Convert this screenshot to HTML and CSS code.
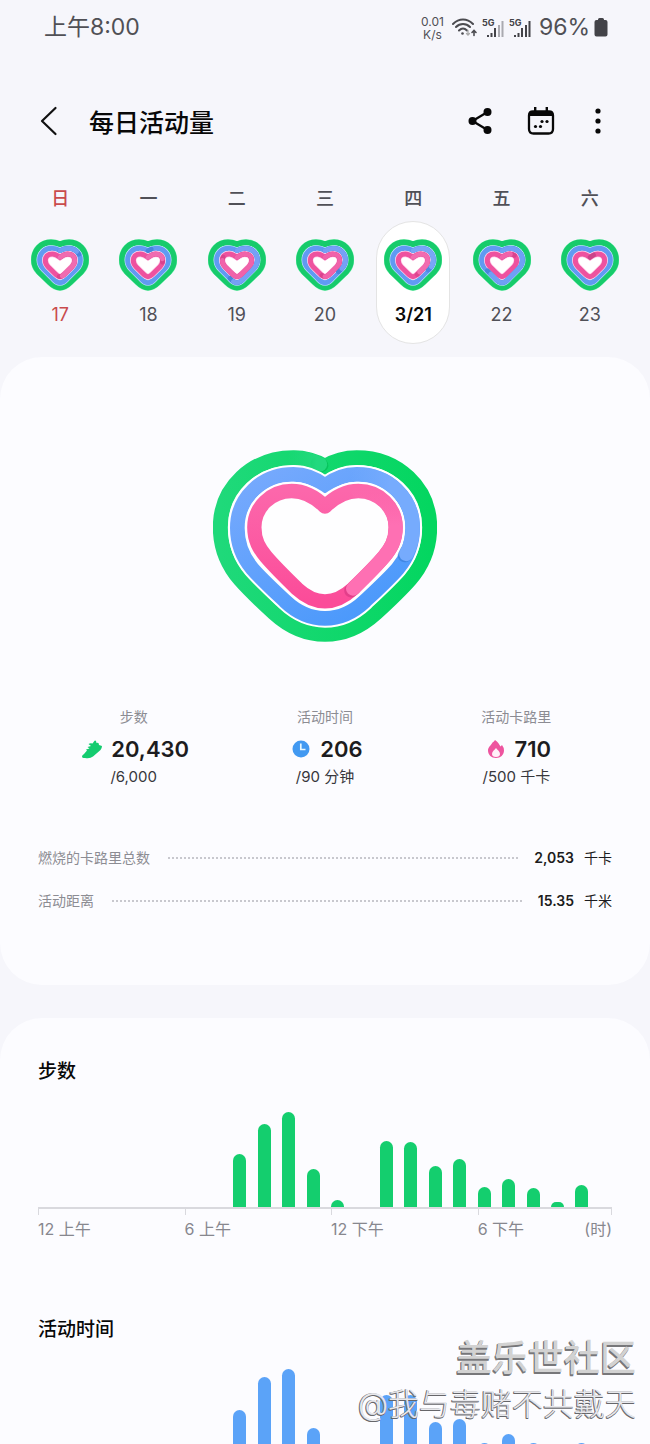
FILE: index.html
```html
<!DOCTYPE html>
<html lang="zh-CN">
<head>
<meta charset="utf-8">
<meta name="viewport" content="width=device-width, initial-scale=1">
<title>每日活动量</title>
<link rel="stylesheet" href="styles.css">
</head>
<body>
<svg class="defs" aria-hidden="true">
  <defs>
    <path id="s-green" pathLength="100" d="M87 15C96 11 104 9 114 9C144 9 165 32 165 62C165 77 160 87 151 97L118 129C108 139 99 145 87 145C75 145 66 139 56 129L23 97C14 87 9 77 9 62C9 32 30 9 60 9C70 9 78 11 87 15Z"/>
    <path id="s-blue" pathLength="100" d="M87 34C96 29 104 27 112 27C133 27 148 42 148 62C148 74 143 82 136 89L108 117C101 125 95 130 87 130C79 130 73 125 66 117L38 89C31 82 26 74 26 62C26 42 41 27 62 27C70 27 78 29 87 34Z"/>
    <path id="s-pink" pathLength="100" d="M87 54C96 47 102 44 110 44C123 44 131 51 131 63C131 71 128 77 123 82L104 101C97 108 93 112 87 112C81 112 77 108 70 101L51 82C46 77 43 71 43 63C43 51 51 44 64 44C72 44 78 47 87 54Z"/>
    <g id="rings" fill="none">
      <use href="#s-green" stroke="#7df3b4" stroke-width="19"/>
      <use href="#s-green" stroke="#17cb6b" stroke-width="17"/>
      <use href="#s-blue" stroke="#b9dcff" stroke-width="19"/>
      <use href="#s-blue" stroke="#609af2" stroke-width="15"/>
      <use href="#s-pink" fill="#fff" stroke="#ffd0ea" stroke-width="19"/>
      <use href="#s-pink" stroke="#ee529f" stroke-width="15"/>
    </g>
    <linearGradient id="g-green" x1="0" x2="1"><stop offset="0" stop-color="#1fd97a"/><stop offset="1" stop-color="#04d660"/></linearGradient>
    <linearGradient id="g-blue" x1="0" y1="0" x2="0.7" y2="1"><stop offset="0" stop-color="#78aafd"/><stop offset="1" stop-color="#4b99fb"/></linearGradient>
    <linearGradient id="g-pink" x1="0" y1="0" x2="0" y2="1"><stop offset="0" stop-color="#fc67ab"/><stop offset="1" stop-color="#fb4c99"/></linearGradient>
    <linearGradient id="t-green" gradientUnits="userSpaceOnUse" x1="260" y1="0" x2="350" y2="0"><stop offset="0" stop-color="#22d97e" stop-opacity="0"/><stop offset="1" stop-color="#22d97e"/></linearGradient>
    <linearGradient id="t-blue" gradientUnits="userSpaceOnUse" x1="450" y1="0" x2="570" y2="0"><stop offset="0" stop-color="#76abfd" stop-opacity="0"/><stop offset="1" stop-color="#76abfd"/></linearGradient>
    <linearGradient id="t-pink" gradientUnits="userSpaceOnUse" x1="0" y1="160" x2="0" y2="270"><stop offset="0" stop-color="#fe70b3" stop-opacity="0"/><stop offset="1" stop-color="#fe70b3"/></linearGradient>
  </defs>
</svg>

<div class="screen">
  <div class="status">
    <span class="clock">上午8:00</span>
    <div class="status-right">
      <span class="speed">0.01<br>K/s</span>
      <svg class="wifi" viewBox="0 0 26 22" fill="none" stroke="#4b4b50" stroke-width="2" stroke-linecap="round">
        <path d="M1 7C7 1 15 1 21 7M4 10C8 6 14 6 18 10M7 13.500C9.500 11 12.500 11 15 13.500"/>
        <circle cx="10.500" cy="16.500" r="1.300" fill="#4b4b50" stroke="none"/>
        <path d="M16 13.500V18M14.500 16.500L16 18L17.500 16.500" stroke="#aaa" stroke-width="1.300"/>
        <path d="M22 18.500V13.500M20 15.500L22 13.500L24 15.500" stroke-width="1.600"/>
      </svg>
      <svg class="signal" viewBox="0 0 23 22" fill="#434348">
        <text x="0" y="9">5G</text>
        <path d="M5 18h2v2h-2zM8.500 16h2v4h-2zM12 11h2v9h-2z"/><path fill="#aaaab0" d="M16 8h2v12h-2zM19.500 4h2v16h-2z"/>
      </svg>
      <svg class="signal" viewBox="0 0 23 22" fill="#434348">
        <text x="0" y="9">5G</text>
        <path d="M5 18h2v2h-2zM8.500 16h2v4h-2zM12 11h2v9h-2zM16 8h2v12h-2zM19.500 4h2v16h-2z"/>
      </svg>
      <span class="percent">96%</span>
      <svg class="battery" viewBox="0 0 14 20" fill="#434348"><path d="M4 1.500Q4 0 5.500 0H8.500Q10 0 10 1.500V2H11.500Q13.500 2 13.500 4V16.500Q13.500 18.500 11.500 18.500H2.500Q.500 18.500 .500 16.500V4Q.500 2 2.500 2H4Z"/></svg>
    </div>
  </div>

  <header class="topbar">
    <button class="icon-btn back" aria-label="返回"><svg viewBox="0 0 18 30" fill="none" stroke="#111" stroke-width="2.200" stroke-linecap="round" stroke-linejoin="round"><path d="M15.500 2L2 15L15.500 28"/></svg></button>
    <h1>每日活动量</h1>
    <div class="actions">
      <button class="icon-btn" aria-label="分享"><svg viewBox="0 0 28 28"><path d="M21.500 5L6.500 14L21.500 23" fill="none" stroke="#080808" stroke-width="2.300"/><g fill="#080808"><circle cx="21.500" cy="5" r="4"/><circle cx="6.500" cy="14" r="4"/><circle cx="21.500" cy="23" r="4"/></g></svg></button>
      <button class="icon-btn" aria-label="日历"><svg viewBox="0 0 28 28" fill="#080808"><path fill="none" stroke="#080808" stroke-width="2.300" d="M6 4.500H22Q26 4.500 26 8.500V22Q26 26.500 21.500 26.500H6.500Q2 26.500 2 22V8.500Q2 4.500 6 4.500Z"/><path d="M2 9V8Q2 4 6 4H22Q26 4 26 8V9Z"/><path d="M7 0h2.400v5H7zM18.600 0H21v5h-2.400z"/><circle cx="15" cy="14.500" r="1.600"/><circle cx="20" cy="14.500" r="1.600"/><circle cx="8.500" cy="19.500" r="1.600"/><circle cx="13.500" cy="19.500" r="1.600"/></svg></button>
      <button class="icon-btn more" aria-label="更多选项"><svg viewBox="0 0 20 28" fill="#080808"><circle cx="10" cy="4" r="2.600"/><circle cx="10" cy="14" r="2.600"/><circle cx="10" cy="24" r="2.600"/></svg></button>
    </div>
  </header>

  <nav class="week" aria-label="星期">
    <div class="day sunday"><span class="weekday">日</span><button class="date"><svg viewBox="0 0 174 154"><use href="#rings"/><g class="tails"><use href="#s-blue" stroke="#4784dc" stroke-dasharray="18 100"/><use href="#s-blue" stroke="#6f9ff5" stroke-dasharray="15 100"/><use href="#s-pink" stroke="#d9438d" stroke-dasharray="51 100"/><use href="#s-pink" stroke="#f06bb0" stroke-dasharray="47 100"/></g></svg>17</button></div>
    <div class="day"><span class="weekday">一</span><button class="date"><svg viewBox="0 0 174 154"><use href="#rings"/><g class="tails"><use href="#s-blue" stroke="#4784dc" stroke-dasharray="3 100"/><use href="#s-blue" stroke="#76a6f6" stroke-dasharray="18 100" stroke-dashoffset="18"/><use href="#s-pink" stroke="#d9438d" stroke-dasharray="25 100"/><use href="#s-pink" stroke="#f06bb0" stroke-dasharray="21 100"/></g></svg>18</button></div>
    <div class="day"><span class="weekday">二</span><button class="date"><svg viewBox="0 0 174 154"><use href="#rings"/><g class="tails"><use href="#s-blue" stroke="#4784dc" stroke-dasharray="57 100"/><use href="#s-blue" stroke="#76a0f6" stroke-dasharray="53 100"/><use href="#s-pink" stroke="#d9438d" stroke-dasharray="81 100"/><use href="#s-pink" stroke="#f062aa" stroke-dasharray="77 100"/></g></svg>19</button></div>
    <div class="day"><span class="weekday">三</span><button class="date"><svg viewBox="0 0 174 154"><use href="#rings"/><g class="tails"><use href="#s-blue" stroke="#4784dc" stroke-dasharray="35 100"/><use href="#s-blue" stroke="#76a0f6" stroke-dasharray="31 100"/><use href="#s-pink" stroke="#d9438d" stroke-dasharray="54 100"/><use href="#s-pink" stroke="#f062aa" stroke-dasharray="50 100"/></g></svg>20</button></div>
    <div class="day"><span class="weekday">四</span><button class="date selected" aria-current="date"><svg viewBox="0 0 174 154"><use href="#rings"/><g class="tails"><use href="#s-blue" stroke="#4b8ae4" stroke-dasharray="33 100"/><use href="#s-blue" stroke="#79a6f7" stroke-dasharray="29 100"/><use href="#s-pink" stroke="#df468f" stroke-dasharray="44 100"/><use href="#s-pink" stroke="#f26cb0" stroke-dasharray="40 100"/></g></svg>3/21</button></div>
    <div class="day"><span class="weekday">五</span><button class="date"><svg viewBox="0 0 174 154"><use href="#rings"/><g class="tails"><use href="#s-blue" stroke="#4784dc" stroke-dasharray="66 100"/><use href="#s-blue" stroke="#6fa0f6" stroke-dasharray="62 100"/><use href="#s-pink" stroke="#d9438d" stroke-dasharray="16 100"/><use href="#s-pink" stroke="#f062aa" stroke-dasharray="11 100"/></g></svg>22</button></div>
    <div class="day"><span class="weekday">六</span><button class="date"><svg viewBox="0 0 174 154"><use href="#rings"/><g class="tails"><use href="#s-blue" stroke="#76a6f6" stroke-dasharray="17 100" stroke-dashoffset="17"/><use href="#s-pink" stroke="#cc4489" stroke-dasharray="5 100"/></g></svg>23</button></div>
  </nav>

  <main>
    <section class="card summary">
      <svg class="heart" viewBox="39 46 672 576" fill="none" role="img" aria-label="每日活动量">
        <path stroke="url(#g-green)" stroke-width="45" stroke-miterlimit="8" d="M375 95C405 77 435 69 470 69C592 69 689 158 689 278C689 342 666 392 630 434C602 466 564 502 528 535C482 577 435 599 375 599C315 599 268 577 222 535C186 502 148 466 120 434C84 392 61 342 61 278C61 158 158 69 280 69C315 69 345 77 375 95Z"/>
        <path stroke="#02b552" stroke-width="40" stroke-linecap="round" opacity=".6" d="M352 86L365 92"/>
        <path stroke="url(#t-green)" stroke-width="43" stroke-linecap="round" d="M285 69C313 70 336 77 360 89"/>
        <path stroke="#fff" stroke-width="56" stroke-miterlimit="8" d="M375 153C405 130 438 119 470 119C565 119 638 190 638 280C638 330 620 370 593 402C568 431 528 468 494 500C458 534 420 551 375 551C330 551 292 534 256 500C222 468 182 431 157 402C130 370 112 330 112 280C112 190 185 119 280 119C312 119 345 130 375 153Z"/>
        <path stroke="url(#g-blue)" stroke-width="44" stroke-miterlimit="8" d="M375 153C405 130 438 119 470 119C565 119 638 190 638 280C638 330 620 370 593 402C568 431 528 468 494 500C458 534 420 551 375 551C330 551 292 534 256 500C222 468 182 431 157 402C130 370 112 330 112 280C112 190 185 119 280 119C312 119 345 130 375 153Z"/>
        <path stroke="#3579d4" stroke-width="42" stroke-linecap="round" opacity=".6" d="M619 352L614 362"/>
        <path stroke="url(#t-blue)" stroke-width="43" stroke-linecap="round" d="M470 119C565 119 638 190 638 280C638 309 631 335 619 358"/>
        <path stroke="#fff" stroke-width="55" d="M375 212C340 181 310 169 275 169C213 169 163 218 163 278C163 318 178 342 198 366C220 392 258 430 292 463C318 487 345 500 375 500C405 500 432 487 458 463C492 430 530 392 552 366C572 342 587 318 587 278C587 218 537 169 475 169C440 169 410 181 375 212Z"/>
        <path stroke="url(#g-pink)" stroke-width="43" stroke-linejoin="round" fill="#fefeff" d="M375 216C340 181 310 169 275 169C213 169 163 218 163 278C163 318 178 342 198 366C220 392 258 430 292 463C318 487 345 500 375 500C405 500 432 487 458 463C492 430 530 392 552 366C572 342 587 318 587 278C587 218 537 169 475 169C440 169 410 181 375 216Z"/>
        <path stroke="#d43580" stroke-width="41" stroke-linecap="round" opacity=".6" d="M464 458L453 468"/>
        <path stroke="url(#t-pink)" stroke-width="42" stroke-linecap="round" d="M475 169C537 169 587 218 587 278C587 318 572 342 552 366C530 392 492 430 459 462"/>
      </svg>
      <div class="stats">
        <div class="stat"><span class="stat-label">步数</span>
          <strong><svg viewBox="0 0 20 20" fill="#14cc70"><path d="M0 17.500Q0 16 2 15L5 11.500L4 10.500L7.500 9.500L5.500 8L9 7L6.500 5Q8 4 10.500 4.500L12 2.500Q13 1 14 2L14.500 4Q17 3 17 6L20 7Q20 9 18.500 11L11 17.500Q8 20 3 19Q0 19 0 17.500Z"/></svg>20,430</strong><span class="goal">/6,000</span></div>
        <div class="stat"><span class="stat-label">活动时间</span>
          <strong><svg viewBox="0 0 20 20"><circle cx="10" cy="10" r="8.500" fill="#4299f1"/><path d="M9.800 4.500V10.500H14.500" fill="none" stroke="#e7f8ff" stroke-width="1.700"/></svg>206</strong><span class="goal">/90 分钟</span></div>
        <div class="stat"><span class="stat-label">活动卡路里</span>
          <strong><svg viewBox="0 0 20 20"><path fill="#ee549f" d="M9 1C12 3 13 5 14.500 7.500L16 6Q18 8.500 18 11.500C18 16 14.500 19 10 19S2 16 2 11.500C2 8 5 6.500 6.500 3.500Q8 2.500 9 1Z"/><path fill="#fff0f8" d="M10 9C11.500 11 14 12.500 14 15Q14 18 10 18Q6 18 6 15C6 12.500 8.500 11 10 9Z"/></svg>710</strong><span class="goal">/500 千卡</span></div>
      </div>
      <dl class="details">
        <div class="detail"><dt>燃烧的卡路里总数</dt><dd><b>2,053</b>千卡</dd></div>
        <div class="detail"><dt>活动距离</dt><dd><b>15.35</b>千米</dd></div>
      </dl>
    </section>

    <section class="card charts">
      <h2>步数</h2>
      <div class="chart">
        <div class="bars steps">
          <i class="h8" style="height:53px"></i><i class="h9" style="height:83px"></i><i class="h10" style="height:95px"></i><i class="h11" style="height:38px"></i><i class="h12" style="height:7px"></i><i class="h14" style="height:66px"></i><i class="h15" style="height:65px"></i><i class="h16" style="height:41px"></i><i class="h17" style="height:48px"></i><i class="h18" style="height:20px"></i><i class="h19" style="height:28px"></i><i class="h20" style="height:19px"></i><i class="h21" style="height:5px"></i><i class="h22" style="height:22px"></i>
        </div>
        <div class="axis"><span>12 上午</span><span>6 上午</span><span>12 下午</span><span class="last">6 下午<em>(时)</em></span></div>
      </div>
      <h2>活动时间</h2>
      <div class="chart">
        <div class="bars active">
          <i class="h8" style="height:55px"></i><i class="h9" style="height:88px"></i><i class="h10" style="height:96px"></i><i class="h11" style="height:37px"></i><i class="h12" style="height:7px"></i><i class="h14" style="height:70px"></i><i class="h15" style="height:70px"></i><i class="h16" style="height:43px"></i><i class="h17" style="height:46px"></i><i class="h18" style="height:22px"></i><i class="h19" style="height:31px"></i><i class="h20" style="height:22px"></i><i class="h21" style="height:5px"></i><i class="h22" style="height:22px"></i>
        </div>
      </div>
    </section>
  </main>

  <div class="watermark"><div class="community">盖乐世社区</div><div class="author">@我与毒赌不共戴天</div></div>
</div>
</body>
</html>
```
FILE: styles.css
```css
* { box-sizing: border-box; }
body {
  margin: 0;
  background: #f6f6fb;
  color: #1c1c20;
  font-family: Inter, "Noto Sans CJK SC", sans-serif;
}
h1, h2, dl, dd { margin: 0; }
button {
  border: 0;
  padding: 0;
  background: none;
  color: inherit;
  font: inherit;
  cursor: pointer;
}
svg { display: block; }
.defs { position: absolute; width: 0; height: 0; }
.screen { position: relative; height: 100vh; overflow: hidden; }

.status {
  display: flex;
  justify-content: space-between;
  align-items: center;
  height: 56px;
  padding: 0 42px 0 44px;
  color: #505055;
}
.clock { font-size: 23px; line-height: 24px; padding-bottom: 2px; }
.status-right { display: flex; align-items: center; gap: 4px; }
.speed { font-size: 12px; line-height: 13px; text-align: center; }
.wifi { width: 26px; height: 22px; margin-left: 4px; }
.signal { width: 23px; height: 22px; }
.signal text { font: 700 9px Inter, sans-serif; }
.percent { margin-left: 3px; font-size: 23px; line-height: 24px; padding-bottom: 2px; }
.battery { width: 14px; height: 20px; }

.topbar {
  display: flex;
  align-items: center;
  height: 64px;
  margin-top: 33px;
  padding: 0 42px 0 40px;
}
.topbar h1 {
  margin-left: 31px;
  padding-top: 4px;
  font-size: 25px;
  font-weight: 500;
  line-height: 36px;
  color: #080808;
}
.icon-btn svg { width: 28px; height: 28px; }
.icon-btn.back svg { width: 18px; height: 30px; }
.icon-btn.more svg { width: 20px; }
.actions { display: flex; gap: 33px; margin-left: auto; }

.week {
  display: grid;
  grid-template-columns: repeat(7, 1fr);
  margin-top: 34px;
  padding: 0 16px;
  color: #505057;
}
.day { display: flex; flex-direction: column; align-items: center; gap: 10px; }
.weekday { font-size: 18px; font-weight: 500; line-height: 24px; }
.date {
  display: flex;
  flex-direction: column;
  align-items: center;
  gap: 12px;
  width: 74px;
  height: 123px;
  padding-top: 17px;
  border: 1px solid transparent;
  border-radius: 37px;
  font-size: 18px;
  line-height: 24px;
}
.date svg { width: 58px; height: 52px; }
.date.selected { background: #fff; border-color: #e4e4e4; color: #080808; font-weight: 600; }
.sunday { color: #c94b4d; }
.tails { fill: none; stroke-width: 14px; stroke-linecap: round; }

.card { padding: 0 38px; border-radius: 42px; background: #fcfcff; }
.summary { margin-top: 13px; padding-top: 93px; padding-bottom: 72px; }
.heart { width: 224px; height: 192px; margin: 0 auto; }
.stats {
  display: grid;
  grid-template-columns: repeat(3, 1fr);
  margin-top: 63px;
}
.stat { display: flex; flex-direction: column; align-items: center; }
.stat-label { font-size: 14px; line-height: 24px; color: #8c8c93; }
.stat strong {
  display: flex;
  align-items: center;
  gap: 9px;
  padding-left: 4px;
  font-size: 22px;
  font-weight: 600;
  line-height: 40px;
}
.stat svg { width: 20px; height: 20px; }
.goal { font-size: 15px; line-height: 16px; color: #37373c; }
.details { display: grid; gap: 19px; margin-top: 61px; }
.detail {
  display: flex;
  align-items: center;
  gap: 16px;
  font-size: 14px;
  line-height: 24px;
}
.detail dt {
  flex: 1;
  display: flex;
  align-items: center;
  gap: 18px;
  color: #8c8c93;
}
.detail dt::after {
  content: "";
  flex: 1;
  height: 2px;
  background: repeating-linear-gradient(90deg, #c8c8ce 0 2px, transparent 2px 4px);
}
.detail b { margin-right: 10px; font-weight: 600; }

.charts { margin-top: 33px; padding-top: 36px; border-radius: 42px 42px 0 0; }
.charts h2 { font-size: 19px; font-weight: 500; line-height: 36px; color: #080808; }
.chart { margin-bottom: 69px; }
.bars {
  display: grid;
  grid-template-columns: repeat(47, 1fr);
  align-items: end;
  height: 117px;
}
.bars i { grid-row: 1; width: 13px; border-radius: 7px 7px 0 0; }
.steps i { background: #14ce6e; }
.active i { background: #5ba3f8; }
.h8 { grid-column: 17 / span 2; }
.h9 { grid-column: 19 / span 2; }
.h10 { grid-column: 21 / span 2; }
.h11 { grid-column: 23 / span 2; }
.h12 { grid-column: 25 / span 2; }
.h14 { grid-column: 29 / span 2; }
.h15 { grid-column: 31 / span 2; }
.h16 { grid-column: 33 / span 2; }
.h17 { grid-column: 35 / span 2; }
.h18 { grid-column: 37 / span 2; }
.h19 { grid-column: 39 / span 2; }
.h20 { grid-column: 41 / span 2; }
.h21 { grid-column: 43 / span 2; }
.h22 { grid-column: 45 / span 2; }
.axis {
  display: grid;
  grid-template-columns: 12fr 12fr 12fr 11fr;
  height: 36px;
  border-top: 2px solid #d9d9de;
  background: linear-gradient(#d9d9de, #d9d9de) right top / 1px 6px no-repeat;
  font-size: 16px;
  line-height: 24px;
  color: #87878e;
}
.axis span {
  padding-top: 8px;
  background: linear-gradient(#d9d9de, #d9d9de) left top / 1px 6px no-repeat;
}
.axis .last { display: flex; justify-content: space-between; }
.axis em { font-style: normal; }

.watermark {
  position: absolute;
  right: 14px;
  bottom: 18px;
  text-align: right;
  white-space: nowrap;
}
.community {
  font-size: 36px;
  font-weight: 500;
  line-height: 48px;
  color: #d2d2d2;
  text-shadow: -1px 1px #77777a, -1px 2px #77777a;
}
.author {
  font-size: 31px;
  font-weight: 300;
  line-height: 44px;
  color: #e8e8ec;
  text-shadow: -1px 0 #77777c, 0 1px #66666a, -1px 1px #66666a;
}
```
